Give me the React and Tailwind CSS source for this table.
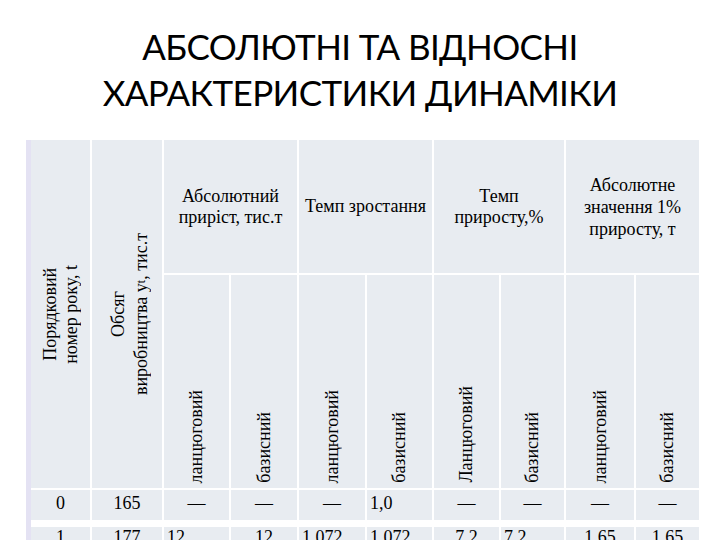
import React from 'react'

const headLabels = ['ланцюговий', 'базисний', 'ланцюговий', 'базисний', 'Ланцюговий', 'базисний', 'ланцюговий', 'базисний']

const rows = [
  [
    { t: '0' }, { t: '165' }, { t: '—' }, { t: '—' }, { t: '—' },
    { t: '1,0', left: true }, { t: '—' }, { t: '—' }, { t: '—' }, { t: '—' },
  ],
  [
    { t: '1' }, { t: '177' }, { t: '12', left: true }, { t: '12' }, { t: '1,072', left: true },
    { t: '1,072', left: true }, { t: '7,2' }, { t: '7,2', left: true }, { t: '1,65' }, { t: '1,65' },
  ],
]

const Vert = ({ children, className = '' }) => (
  <span className={`[writing-mode:vertical-rl] rotate-180 ${className}`}>{children}</span>
)

const DataRow = ({ cells, className }) => (
  <div className={`grid grid-cols-[59px_70px_65px_66px_66px_65px_65px_63px_68px_63px] gap-x-[2px] ${className}`}>
    {cells.map((c, i) => (
      <div
        key={i}
        className={`bg-[#e8ecf1] leading-[21px] ${c.left ? 'text-left pl-[3px]' : 'text-center'}`}
      >
        {c.t}
      </div>
    ))}
  </div>
)

export default function App() {
  return (
    <div className="w-[720px] h-[540px] overflow-hidden bg-white text-black">
      {/* Title */}
      <h1 className="pt-[23px] pb-[25px] text-center font-['Lato',sans-serif] text-[35px] tracking-[-0.6px] leading-[46px] font-normal">
        АБСОЛЮТНІ ТА ВІДНОСНІ
        <br />
        ХАРАКТЕРИСТИКИ ДИНАМІКИ
      </h1>

      {/* Table */}
      <div className="ml-[26px] w-[673px] border-l-[5px] border-[#e4e2f3] bg-white font-['Liberation_Serif','Times_New_Roman',serif] text-[18px]">
        <div className="grid grid-cols-[59px_70px_65px_66px_66px_65px_65px_63px_68px_63px] grid-rows-[133px_213px_30px] gap-[2px]">
          <div className="row-span-2 bg-[#e8ecf1] flex items-center justify-center">
            <Vert className="text-center leading-[21px]">
              Порядковий
              <br />
              номер року, t
            </Vert>
          </div>
          <div className="row-span-2 bg-[#e8ecf1] flex items-center justify-center pl-[6px]">
            <Vert className="text-center leading-[23px]">
              Обсяг
              <br />
              виробництва у<span className="text-[12px]">t</span>, тис.т
            </Vert>
          </div>
          <div className="col-span-2 bg-[#e8ecf1] flex items-center justify-center text-center leading-[21px]">
            <p>
              Абсолютний
              <br />
              приріст, тис.т
            </p>
          </div>
          <div className="col-span-2 bg-[#e8ecf1] flex items-center justify-center text-center leading-[21px]">
            <p>Темп зростання</p>
          </div>
          <div className="col-span-2 bg-[#e8ecf1] flex items-center justify-center text-center leading-[21px]">
            <p>
              Темп
              <br />
              приросту,%
            </p>
          </div>
          <div className="col-span-2 bg-[#e8ecf1] flex items-center justify-center text-center leading-[22px]">
            <p>
              Абсолютне
              <br />
              значення 1%
              <br />
              приросту, т
            </p>
          </div>

          {headLabels.map((label, i) => (
            <div key={i} className="bg-[#e8ecf1] flex items-end justify-center pb-[5px]">
              <Vert className="leading-[21px]">{label}</Vert>
            </div>
          ))}

          {rows[0].map((c, i) => (
            <div
              key={i}
              className={`bg-[#e8ecf1] pt-[3px] leading-[21px] ${c.left ? 'text-left pl-[3px]' : 'text-center'}`}
            >
              {c.t}
            </div>
          ))}
        </div>

        <DataRow cells={rows[1]} className="mt-[7px] h-[34px]" />
      </div>
    </div>
  )
}
